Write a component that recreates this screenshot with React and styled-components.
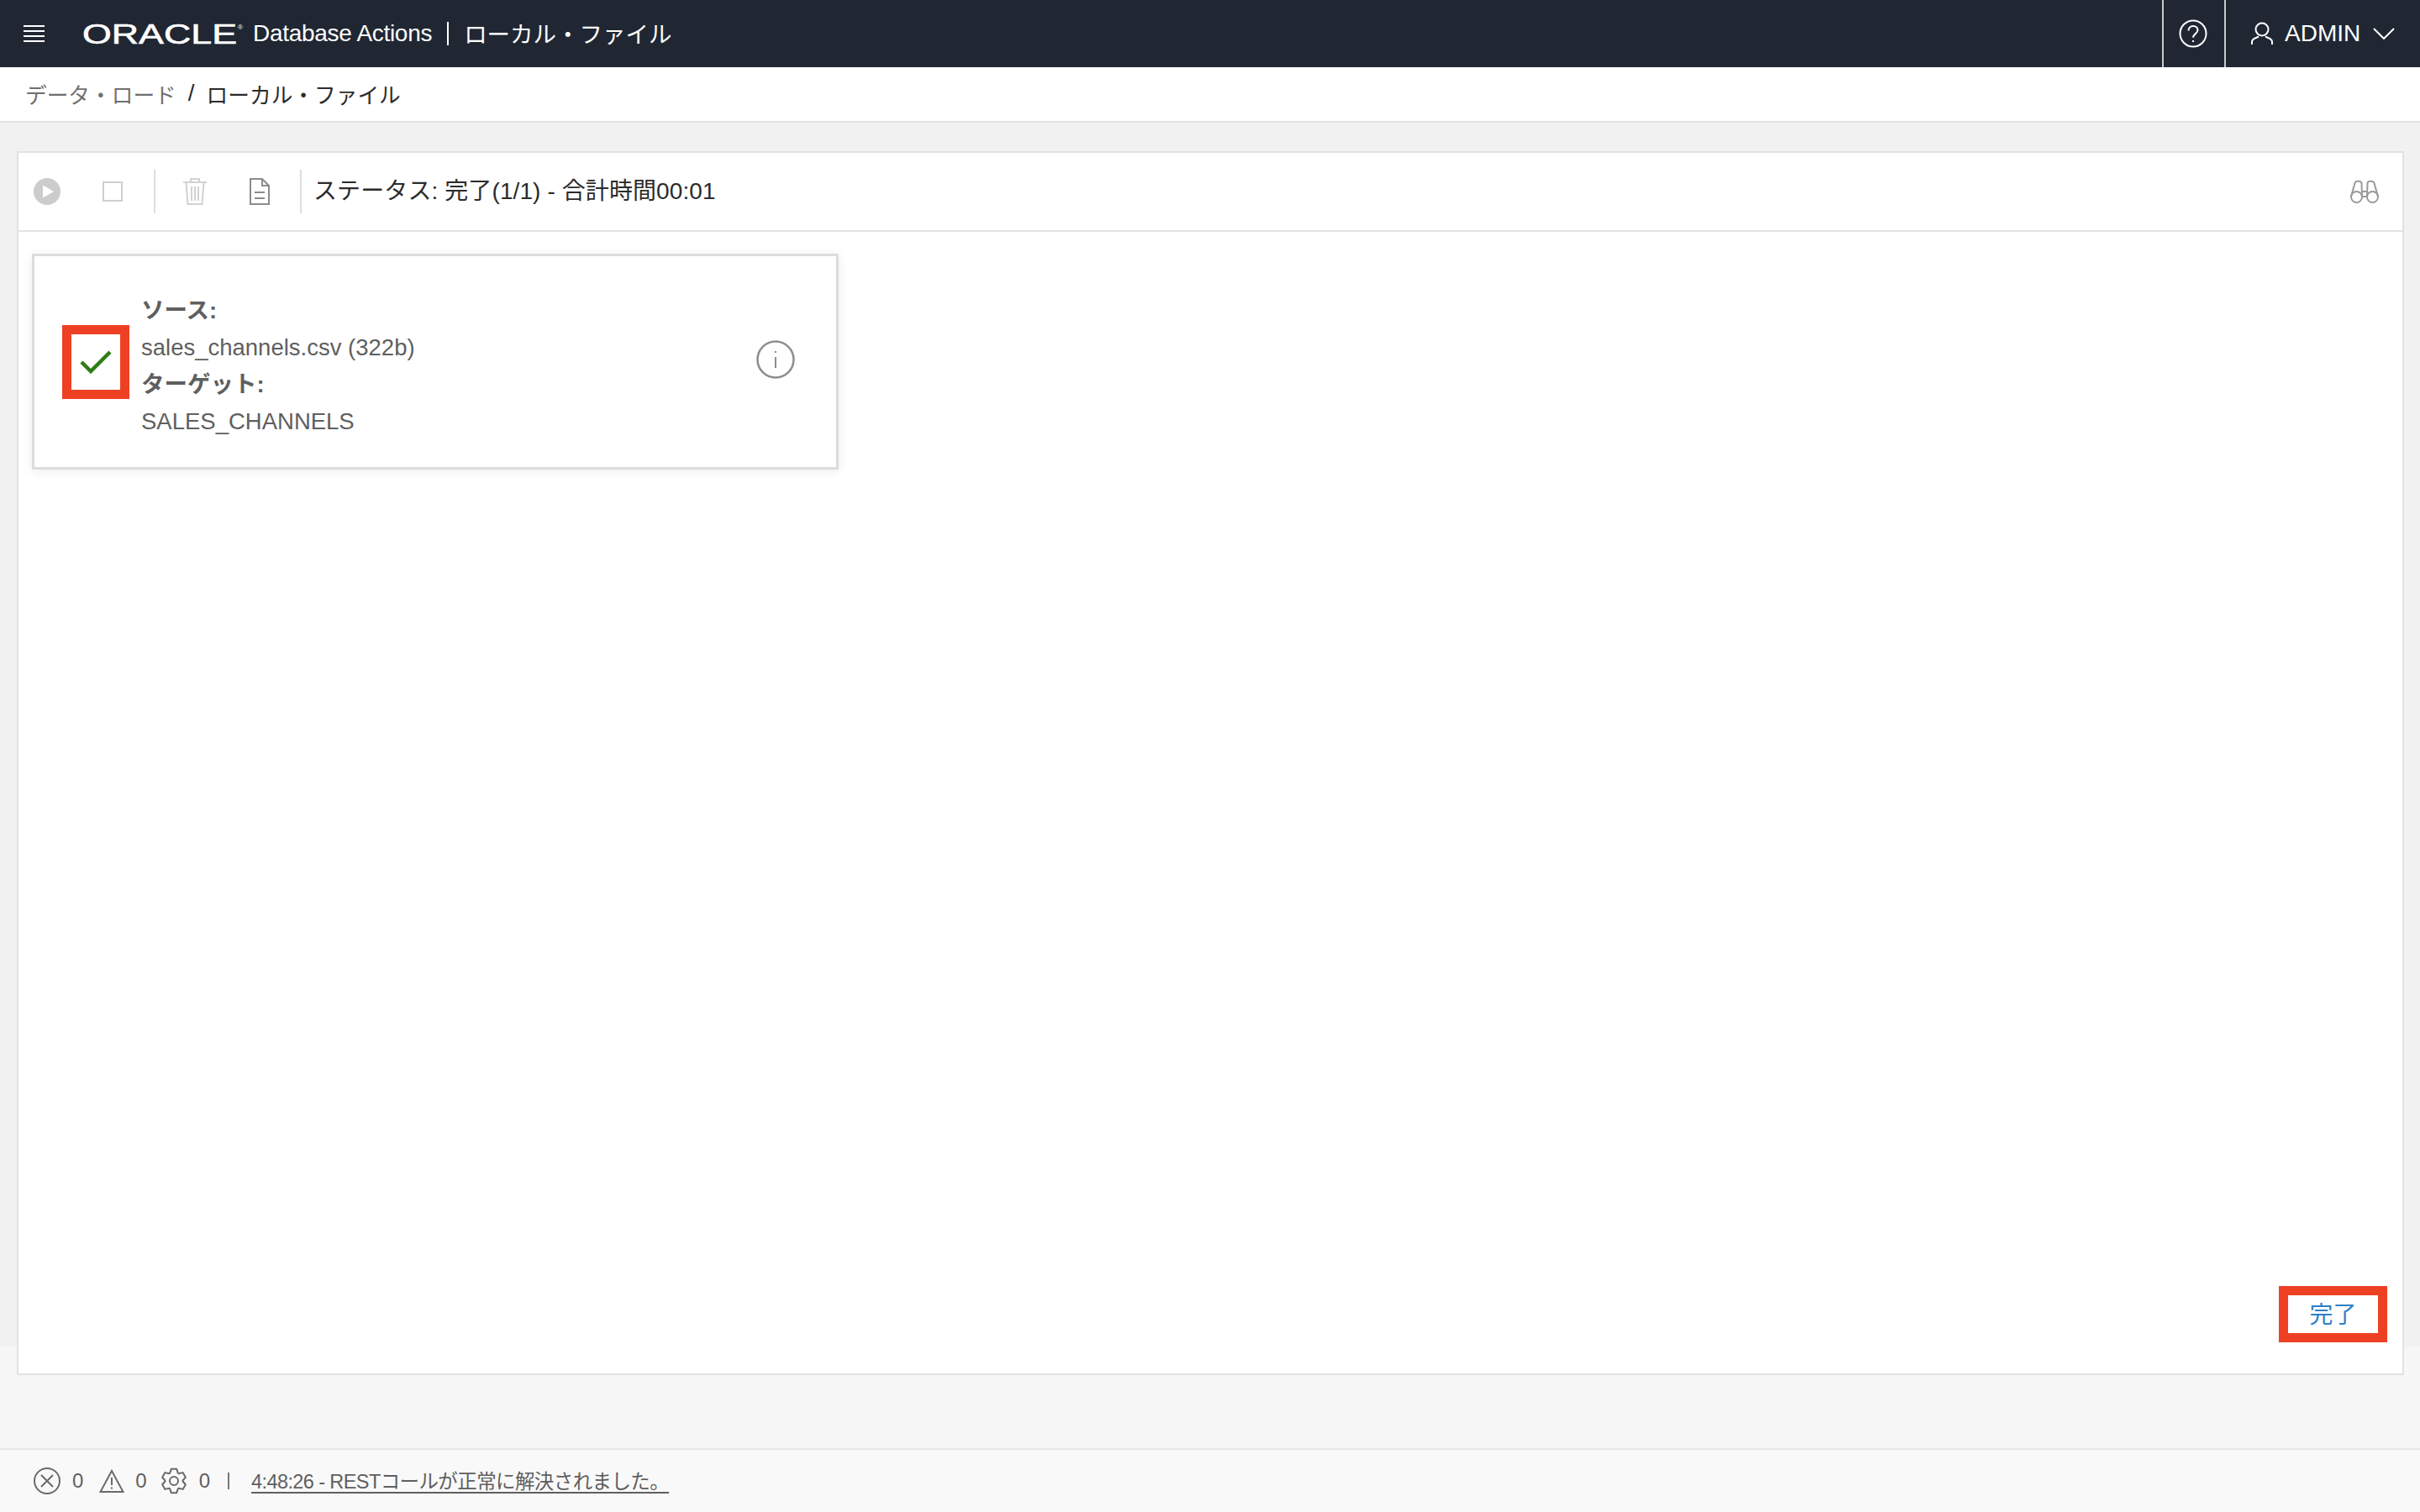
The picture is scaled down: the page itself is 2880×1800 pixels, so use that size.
import React from 'react';
import styled, { createGlobalStyle } from 'styled-components';

const FONT = '"Liberation Sans", "Noto Sans CJK JP", sans-serif';

const GlobalStyle = createGlobalStyle`
    html, body {
        margin: 0;
        padding: 0;
        background: #f7f7f7;
    }
    body {
        font-family: ${FONT};
    }
`;

const Page = styled.div`
    display: flex;
    flex-direction: column;
    width: 2880px;
    height: 1800px;
    overflow: hidden;
`;

const Header = styled.header`
    display: flex;
    align-items: center;
    flex: 0 0 80px;
    background: #202733;
    color: #fff;
`;

const MenuButton = styled.div`
    display: flex;
    margin-left: 28px;
    width: 25px;
    height: 20px;
`;

const Logo = styled.svg`
    display: block;
    margin-left: 45px;
    width: 195px;
    height: 32px;
    overflow: visible;
    text {
        font-family: ${FONT};
    }
`;

const AppName = styled.span`
    margin-left: 8px;
    font-size: 28px;
    letter-spacing: -0.3px;
`;

const TitleDivider = styled.span`
    width: 2px;
    height: 28px;
    margin: 0 18px 0 18px;
    background: #fff;
`;

const AppTitle = styled.span`
    padding-bottom: 2px;
    font-size: 27.5px;
`;

const HeaderRight = styled.div`
    display: flex;
    align-items: stretch;
    align-self: stretch;
    margin-left: auto;
`;

const HelpCell = styled.div`
    display: flex;
    align-items: center;
    justify-content: center;
    box-sizing: content-box;
    width: 70px;
    padding-right: 2px;
    border-left: 2px solid #c9c9c9;
    border-right: 2px solid #c9c9c9;
`;

const UserCell = styled.div`
    display: flex;
    align-items: center;
    width: 231px;
    padding-left: 30px;
    box-sizing: border-box;
    font-size: 28px;
`;

const UserName = styled.span`
    margin: 0 15px 0 14px;
`;

const Breadcrumb = styled.nav`
    display: flex;
    align-items: center;
    flex: 0 0 62px;
    padding: 0 0 2px 30px;
    background: #fff;
    border-bottom: 2px solid #dfe2e6;
    font-size: 25.7px;
    color: #2b2b2b;
`;

const CrumbLink = styled.span`
    color: #6f6f6f;
`;

const CrumbSlash = styled.span`
    margin: 0 14px;
    font-size: 28px;
`;

const Main = styled.main`
    flex: 1;
    display: flex;
    flex-direction: column;
    padding: 34px 19px 87px 20px;
    background: linear-gradient(#f1f1f1 1457px, #f7f7f7 1457px);
`;

const Panel = styled.section`
    flex: 1;
    display: flex;
    flex-direction: column;
    background: #fff;
    border: 2px solid #e2e2e2;
`;

const Toolbar = styled.div`
    display: flex;
    align-items: center;
    flex: 0 0 92px;
    border-bottom: 2px solid #e2e2e2;
`;

const ToolIcon = styled.div`
    display: flex;
    align-items: center;
    justify-content: center;
    width: ${p => p.$w}px;
    margin-left: ${p => p.$ml || 0}px;
`;

const ToolDivider = styled.span`
    flex: none;
    width: 2px;
    height: 52px;
    background: #dedede;
    margin: ${p => p.$m};
`;

const StatusText = styled.span`
    padding-bottom: 7px;
    font-size: 28px;
    color: #2b2b2b;
    letter-spacing: 0.1px;
`;

const FindButton = styled.div`
    display: flex;
    margin-left: auto;
    margin-right: 28px;
`;

const PanelBody = styled.div`
    flex: 1;
    display: flex;
    flex-direction: column;
    align-items: flex-start;
    padding: 26px 18px 37px 16px;
`;

const Card = styled.article`
    display: flex;
    align-items: center;
    box-sizing: border-box;
    width: 960px;
    height: 257px;
    padding: 0 49px 0 33px;
    border: 3px solid #dcdcdc;
    box-shadow: 0 2px 12px rgba(0, 0, 0, 0.08);
    background: #fff;
`;

const StatusBox = styled.div`
    display: flex;
    align-items: center;
    justify-content: center;
    flex: none;
    box-sizing: border-box;
    width: 80px;
    height: 88px;
    border: 11px solid #ee4123;
`;

const CardText = styled.div`
    flex: 1;
    margin-left: 14px;
    padding-top: 11px;
    font-size: 27.5px;
    line-height: 44px;
    color: #5f5f5f;
`;

const CardLabel = styled.div`
    font-weight: 700;
`;

const InfoWrap = styled.div`
    display: flex;
    margin-bottom: 5px;
`;

const FinishButton = styled.button`
    align-self: flex-end;
    margin-top: auto;
    box-sizing: border-box;
    width: 129px;
    height: 67px;
    padding: 0 0 4px;
    border: 11px solid #ee4123;
    background: #fff;
    color: #2f7fc8;
    font-family: ${FONT};
    font-size: 28px;
`;

const Footer = styled.footer`
    display: flex;
    align-items: center;
    flex: 0 0 74px;
    padding-left: 40px;
    border-top: 2px solid #e8e8e8;
    background: #f9f9f9;
    font-size: 24px;
    color: #5f5f5f;
`;

const Count = styled.span`
    margin: 0 ${p => p.$mr}px 0 ${p => p.$ml}px;
`;

const FooterDivider = styled.span`
    width: 2px;
    height: 20px;
    margin: 0 26px 0 21px;
    background: #777;
`;

const MessageLink = styled.a`
    padding-bottom: 2px;
    color: #5f5f5f;
    text-decoration: underline;
    text-decoration-thickness: 2px;
    text-underline-offset: 4px;
    font-size: 23.5px;
    letter-spacing: -0.6px;
`;

function MenuIcon() {
    return (
        <svg width="25" height="20" viewBox="0 0 25 20" stroke="#fff" strokeWidth="2">
            <path d="M0 1h25M0 7h25M0 13h25M0 19h25" />
        </svg>
    );
}

function OracleLogo() {
    return (
        <Logo viewBox="0 0 195 32">
            <text x="0" y="28" fontSize="33" fill="#fff" stroke="#fff" strokeWidth="0.6" textLength="184" lengthAdjust="spacingAndGlyphs">ORACLE</text>
            <text x="185" y="11" fontSize="8" fill="#fff">®</text>
        </Logo>
    );
}

function HelpIcon() {
    return (
        <svg width="34" height="34" viewBox="0 0 34 34" fill="none" stroke="#fff" strokeWidth="2">
            <circle cx="17" cy="17" r="15.5" />
            <path d="M11.5 13.5c0-3.4 2.5-5.5 5.6-5.5 3.1 0 5.4 2 5.4 4.8 0 4.4-5.5 4.3-5.5 9" />
            <path d="M17 25v2" />
        </svg>
    );
}

function UserIcon() {
    return (
        <svg width="26" height="28" viewBox="0 0 26 28" fill="none" stroke="#fff" strokeWidth="2">
            <circle cx="13" cy="9" r="7.5" />
            <path d="M1 27v-3c0-3 2-4 5-5l3-1.500M25 27v-3c0-3-2-4-5-5l-3-1.500" />
        </svg>
    );
}

function ChevronIcon() {
    return (
        <svg width="26" height="14" viewBox="0 0 26 14" fill="none" stroke="#fff" strokeWidth="2">
            <path d="M1 1l12 12L25 1" />
        </svg>
    );
}

function PlayIcon() {
    return (
        <svg width="32" height="32" viewBox="0 0 32 32">
            <circle cx="16" cy="16" r="16" fill="#cbcccd" />
            <path d="M11 8.500L24 16 11 23.500z" fill="#fff" />
        </svg>
    );
}

function StopIcon() {
    return (
        <svg width="24" height="24" viewBox="0 0 24 24" fill="none" stroke="#cfcfcf" strokeWidth="2">
            <rect x="1" y="1" width="22" height="22" />
        </svg>
    );
}

function TrashIcon() {
    return (
        <svg width="28" height="32" viewBox="0 0 28 32" fill="none" stroke="#d2d2d2" strokeWidth="2">
            <path d="M0 5h28M9 5V1h10v4M3.500 5l2 26h17l2-26M10 10v17M14 10v17M18 10v17" />
        </svg>
    );
}

function DocIcon() {
    return (
        <svg width="24" height="32" viewBox="0 0 24 32" fill="none" stroke="#8c8c8c" strokeWidth="2">
            <path d="M1 1h14l8 8v22H1zM15 1v8h8" />
            <path d="M6 17h12M6 24h12" />
        </svg>
    );
}

function BinocularsIcon() {
    return (
        <svg width="34" height="28" viewBox="0 0 34 28" fill="none" stroke="#9a9a9a" strokeWidth="2">
            <circle cx="7.500" cy="20.500" r="6.500" />
            <circle cx="26.500" cy="20.500" r="6.500" />
            <path d="M1 20L5.500 4C6.200 1 13 1 13.500 4L14 20M33 20L28.500 4C27.800 1 21 1 20.500 4L20 20M14 14h6M14 20h6" />
        </svg>
    );
}

function CheckIcon() {
    return (
        <svg width="38" height="28" viewBox="0 0 38 28" fill="none" stroke="#2e7d16" strokeWidth="4.500">
            <path d="M2 14l11 11L36 2" />
        </svg>
    );
}

function InfoIcon() {
    return (
        <svg width="46" height="46" viewBox="0 0 46 46" fill="none" stroke="#8d8d8d" strokeWidth="2.500">
            <circle cx="23" cy="23" r="21.500" />
            <path d="M23 20v13M23 13v2" strokeWidth="2" />
        </svg>
    );
}

function ErrorIcon() {
    return (
        <svg width="32" height="32" viewBox="0 0 32 32" fill="none" stroke="#6a6a6a" strokeWidth="2">
            <circle cx="16" cy="16" r="15" />
            <path d="M9 9l14 14M23 9L9 23" />
        </svg>
    );
}

function WarningIcon() {
    return (
        <svg width="30" height="28" viewBox="0 0 30 28" fill="none" stroke="#6a6a6a" strokeWidth="2">
            <path d="M15 2L1.500 27h27zM15 10v9M15 21.500v2" />
        </svg>
    );
}

// six rounded teeth, one pointing straight up
function gearPath() {
    const cx = 15, cy = 16;
    const points = [];
    for (let i = 0; i < 6; i++) {
        const a = -90 + i * 60;
        [[-27, 10.5], [-13, 14.5], [13, 14.5], [27, 10.5]].forEach(([off, r]) => {
            const rad = (a + off) * Math.PI / 180;
            points.push(`${(cx + r * Math.cos(rad)).toFixed(2)} ${(cy + r * Math.sin(rad)).toFixed(2)}`);
        });
    }
    return `M${points.join('L')}z`;
}

function GearIcon() {
    return (
        <svg width="30" height="32" viewBox="0 0 30 32" fill="none" stroke="#6a6a6a" strokeWidth="2" strokeLinejoin="round">
            <circle cx="15" cy="16" r="5" />
            <path d={gearPath()} />
        </svg>
    );
}

function App() {
    return (
        <Page>
            <GlobalStyle />
            <Header>
                <MenuButton><MenuIcon /></MenuButton>
                <OracleLogo />
                <AppName>Database Actions</AppName>
                <TitleDivider />
                <AppTitle>ローカル・ファイル</AppTitle>
                <HeaderRight>
                    <HelpCell><HelpIcon /></HelpCell>
                    <UserCell>
                        <UserIcon />
                        <UserName>ADMIN</UserName>
                        <ChevronIcon />
                    </UserCell>
                </HeaderRight>
            </Header>

            <Breadcrumb>
                <CrumbLink>データ・ロード</CrumbLink>
                <CrumbSlash>/</CrumbSlash>
                <span>ローカル・ファイル</span>
            </Breadcrumb>

            <Main>
                <Panel>
                    <Toolbar>
                        <ToolIcon $w={32} $ml={18}><PlayIcon /></ToolIcon>
                        <ToolIcon $w={24} $ml={50}><StopIcon /></ToolIcon>
                        <ToolDivider $m="0 0 0 37px" />
                        <ToolIcon $w={28} $ml={33}><TrashIcon /></ToolIcon>
                        <ToolIcon $w={24} $ml={51}><DocIcon /></ToolIcon>
                        <ToolDivider $m="0 14px 0 36px" />
                        <StatusText>ステータス: 完了(1/1) - 合計時間00:01</StatusText>
                        <FindButton><BinocularsIcon /></FindButton>
                    </Toolbar>
                    <PanelBody>
                        <Card>
                            <StatusBox><CheckIcon /></StatusBox>
                            <CardText>
                                <CardLabel>ソース:</CardLabel>
                                <div>sales_channels.csv (322b)</div>
                                <CardLabel>ターゲット:</CardLabel>
                                <div>SALES_CHANNELS</div>
                            </CardText>
                            <InfoWrap><InfoIcon /></InfoWrap>
                        </Card>
                        <FinishButton>完了</FinishButton>
                    </PanelBody>
                </Panel>
            </Main>

            <Footer>
                <ErrorIcon />
                <Count $ml={14} $mr={19}>0</Count>
                <WarningIcon />
                <Count $ml={13} $mr={17}>0</Count>
                <GearIcon />
                <Count $ml={15} $mr={0}>0</Count>
                <FooterDivider />
                <MessageLink>4:48:26 - RESTコールが正常に解決されました。</MessageLink>
            </Footer>
        </Page>
    );
}

export default App;
